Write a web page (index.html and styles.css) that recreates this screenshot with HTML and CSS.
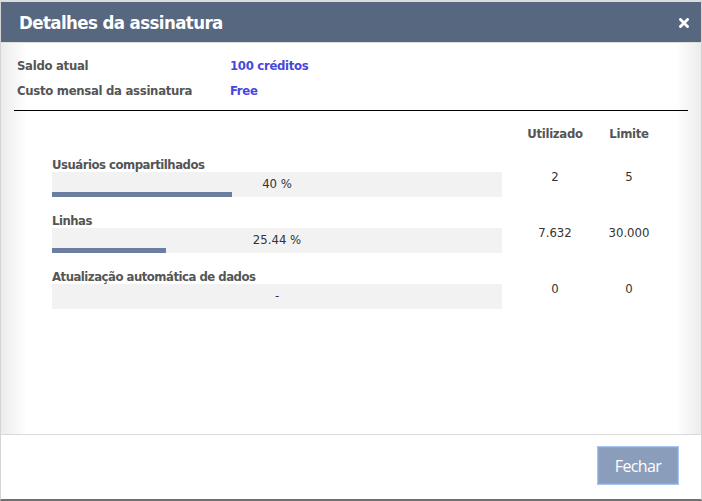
FILE: index.html
```html
<!DOCTYPE html>
<html lang="pt">
<head>
<meta charset="utf-8">
<title>Detalhes da assinatura</title>
<link rel="stylesheet" href="styles.css">
</head>
<body>
<div class="modal">
  <div class="modal-header">
    <h1 class="modal-title">Detalhes da assinatura</h1>
    <button class="close" aria-label="Fechar">
      <svg width="10" height="10" viewBox="0 0 10 10"><path d="M1.5 1.5 L8.5 8.5 M8.5 1.5 L1.5 8.5" stroke="#fff" stroke-width="2.8" stroke-linecap="square"/></svg>
    </button>
  </div>
  <div class="modal-body">
    <div class="info">
      <div class="info-label">Saldo atual</div>
      <div class="info-value">100 créditos</div>
      <div class="info-label">Custo mensal da assinatura</div>
      <div class="info-value">Free</div>
    </div>
    <div class="divider"></div>
    <div class="usage">
      <div></div>
      <div class="col-head used">Utilizado</div>
      <div class="col-head">Limite</div>

      <div class="item">
        <div class="item-label">Usuários compartilhados</div>
        <div class="bar">
          <div class="bar-text">40 %</div>
          <div class="bar-track"><div class="bar-fill" style="width:40%"></div></div>
        </div>
      </div>
      <div class="num used">2</div>
      <div class="num">5</div>

      <div class="item">
        <div class="item-label">Linhas</div>
        <div class="bar">
          <div class="bar-text">25.44 %</div>
          <div class="bar-track"><div class="bar-fill" style="width:25.44%"></div></div>
        </div>
      </div>
      <div class="num used">7.632</div>
      <div class="num">30.000</div>

      <div class="item">
        <div class="item-label">Atualização automática de dados</div>
        <div class="bar">
          <div class="bar-text">-</div>
          <div class="bar-track"></div>
        </div>
      </div>
      <div class="num used">0</div>
      <div class="num">0</div>
    </div>
  </div>
  <div class="modal-footer">
    <button class="btn">Fechar</button>
  </div>
</div>
</body>
</html>
```
FILE: styles.css
```css
html, body {
  margin: 0;
  padding: 0;
  background: #fff;
}
body {
  font-family: "DejaVu Sans Condensed", "DejaVu Sans", Verdana, sans-serif;
  font-stretch: condensed;
  font-size: 13px;
  color: #333;
}
.modal {
  width: 702px;
  height: 501px;
  box-sizing: border-box;
  border-top: 2px solid #dcdcdc;
  border-left: 1px solid #d4d4d4;
  border-right: 1px solid #d4d4d4;
  border-bottom: 2px solid #707070;
  display: flex;
  flex-direction: column;
}
.modal-header {
  height: 40px;
  background: #56677f;
  border-bottom: 1px solid #dedede;
  display: flex;
  align-items: center;
  justify-content: space-between;
  padding: 0 12px 0 18px;
}
.modal-title {
  margin: 0;
  font-size: 18.5px;
  font-weight: bold;
  color: #fff;
  letter-spacing: -0.6px;
}
.close {
  border: 0;
  background: transparent;
  padding: 0;
  width: 10px;
  height: 10px;
  display: flex;
  margin-top: 1px;
}
.modal-body {
  flex: 1;
  background: linear-gradient(to right, #ececec 0, #fff 26px, #fff calc(100% - 26px), #ececec 100%);
  border-bottom: 1px solid #dadada;
  padding: 15px 13px 0 13px;
}
.info {
  display: grid;
  grid-template-columns: 213px auto;
  row-gap: 10px;
  padding-left: 3px;
  line-height: 15px;
}
.info-label {
  font-weight: bold;
  color: #555;
  letter-spacing: -0.3px;
}
.info-value {
  font-weight: bold;
  color: #4747dd;
  letter-spacing: -0.3px;
}
.divider {
  height: 0;
  border-top: 1px solid #000;
  margin-top: 12px;
}
.usage {
  display: grid;
  grid-template-columns: 450px 90px 74px;
  row-gap: 17px;
  margin: 16px 0 0 38px;
  width: 614px;
}
.used {
  padding-left: 16px;
}
.col-head {
  font-weight: bold;
  color: #555;
  text-align: center;
  line-height: 14px;
  letter-spacing: -0.3px;
}
.item-label {
  font-weight: bold;
  color: #555;
  line-height: 14px;
  letter-spacing: -0.5px;
}
.bar {
  height: 25px;
  background: #f2f2f2;
  display: flex;
  flex-direction: column;
}
.bar-text {
  text-align: center;
  line-height: 14px;
  padding-top: 5px;
  height: 15px;
  font-size: 13px;
}
.bar-track {
  height: 5px;
}
.bar-fill {
  height: 5px;
  background: #6a7fa0;
}
.num {
  text-align: center;
  padding-top: 12px;
  line-height: 14px;
  font-size: 13px;
}
.modal-footer {
  height: 64px;
  display: flex;
  justify-content: flex-end;
  align-items: flex-start;
  padding: 11px 22px 0 0;
  box-sizing: border-box;
}
.btn {
  width: 82px;
  height: 39px;
  background: #8a9dbb;
  border: 1px solid #a7c3f3;
  box-shadow: inset 0 0 0 1px #90a6cc;
  color: #fff;
  font-family: "Open Sans", sans-serif;
  font-size: 16px;
  letter-spacing: -0.6px;
  padding: 0;
}
```
